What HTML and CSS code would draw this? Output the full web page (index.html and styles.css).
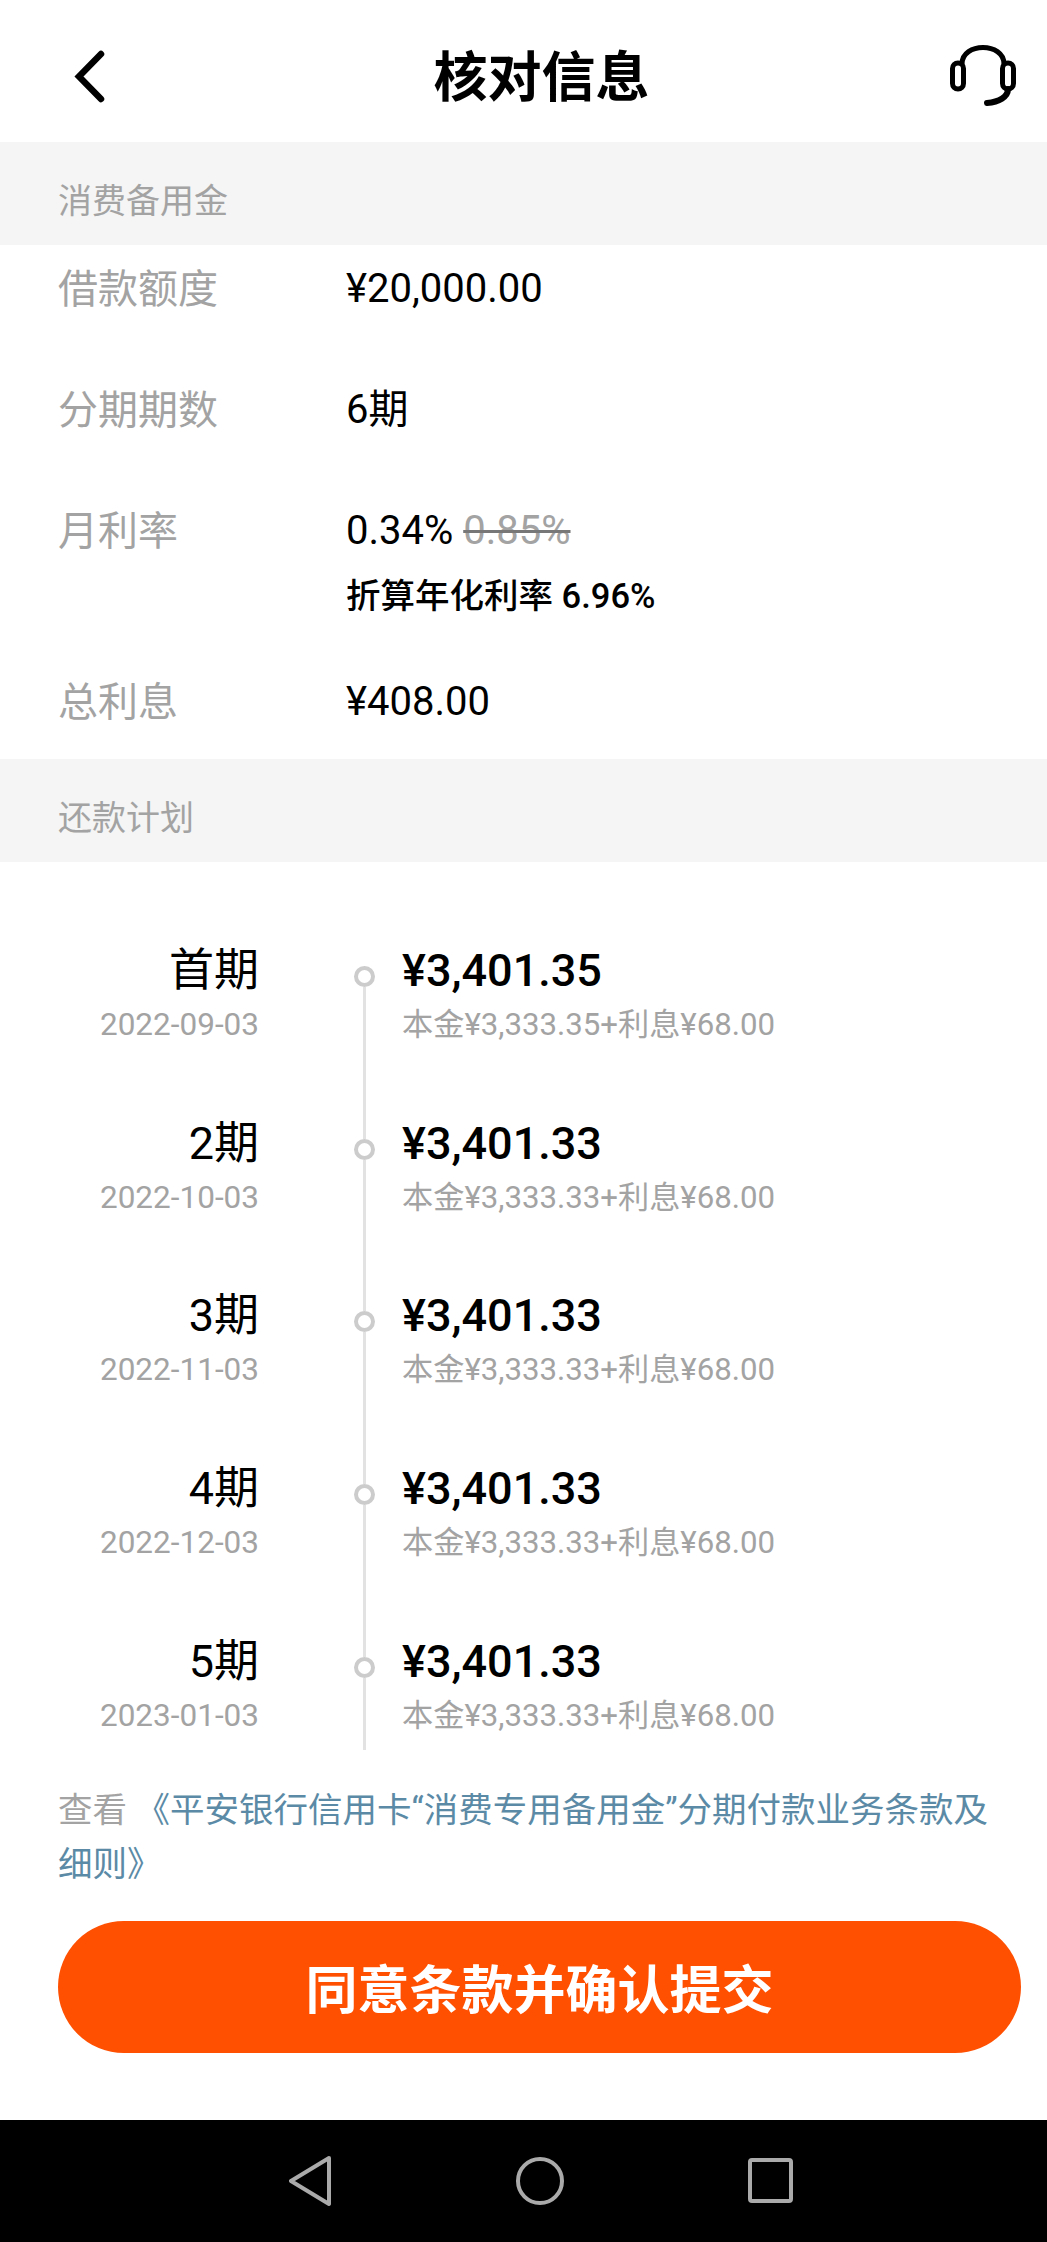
FILE: index.html
```html
<!DOCTYPE html>
<html lang="zh-CN">
<head>
    <meta charset="UTF-8">
    <meta name="viewport" content="width=device-width, initial-scale=1.0">
    <title>核对信息</title>
    <link rel="stylesheet" href="styles.css">
</head>
<body>

    <header class="topbar">
        <svg class="icon-back" width="40" height="60" viewBox="0 0 40 60">
            <path d="M31 7 L9 29.5 L31 52" fill="none" stroke="#000" stroke-width="6.5" stroke-linecap="round" stroke-linejoin="miter"/>
        </svg>
        <h1 class="title">核对信息</h1>
        <svg class="icon-service" width="68" height="62" viewBox="0 0 68 62">
            <path d="M13 20 C13 -2 55 -2 55 20" fill="none" stroke="#000" stroke-width="5"/>
            <rect x="3.5" y="19" width="11" height="26" rx="5.5" fill="none" stroke="#000" stroke-width="5"/>
            <rect x="53.5" y="19" width="11" height="26" rx="5.5" fill="none" stroke="#000" stroke-width="5"/>
            <path d="M59 45 C59 53 50 58 38 59" fill="none" stroke="#000" stroke-width="6" stroke-linecap="round"/>
        </svg>
    </header>

    <div class="section-head">消费备用金</div>

    <section class="info">
        <div class="info-row">
            <div class="info-label">借款额度</div>
            <div class="info-value">¥20,000.00</div>
        </div>
        <div class="info-row">
            <div class="info-label">分期期数</div>
            <div class="info-value">6期</div>
        </div>
        <div class="info-row">
            <div class="info-label">月利率</div>
            <div class="info-value">
                0.34% <span class="old-rate">0.85%</span>
                <div class="info-note">折算年化利率 6.96%</div>
            </div>
        </div>
        <div class="info-row">
            <div class="info-label">总利息</div>
            <div class="info-value">¥408.00</div>
        </div>
    </section>

    <div class="section-head">还款计划</div>

    <section class="plan">
        <div class="plan-row">
            <div class="plan-when"><div class="plan-term">首期</div><div class="plan-date">2022-09-03</div></div>
            <div class="plan-axis"><span class="plan-dot"></span><span class="plan-line"></span></div>
            <div class="plan-money"><div class="plan-amount">¥3,401.35</div><div class="plan-detail">本金¥3,333.35+利息¥68.00</div></div>
        </div>
        <div class="plan-row">
            <div class="plan-when"><div class="plan-term">2期</div><div class="plan-date">2022-10-03</div></div>
            <div class="plan-axis"><span class="plan-dot"></span><span class="plan-line"></span></div>
            <div class="plan-money"><div class="plan-amount">¥3,401.33</div><div class="plan-detail">本金¥3,333.33+利息¥68.00</div></div>
        </div>
        <div class="plan-row">
            <div class="plan-when"><div class="plan-term">3期</div><div class="plan-date">2022-11-03</div></div>
            <div class="plan-axis"><span class="plan-dot"></span><span class="plan-line"></span></div>
            <div class="plan-money"><div class="plan-amount">¥3,401.33</div><div class="plan-detail">本金¥3,333.33+利息¥68.00</div></div>
        </div>
        <div class="plan-row">
            <div class="plan-when"><div class="plan-term">4期</div><div class="plan-date">2022-12-03</div></div>
            <div class="plan-axis"><span class="plan-dot"></span><span class="plan-line"></span></div>
            <div class="plan-money"><div class="plan-amount">¥3,401.33</div><div class="plan-detail">本金¥3,333.33+利息¥68.00</div></div>
        </div>
        <div class="plan-row plan-row-last">
            <div class="plan-when"><div class="plan-term">5期</div><div class="plan-date">2023-01-03</div></div>
            <div class="plan-axis"><span class="plan-dot"></span><span class="plan-line"></span></div>
            <div class="plan-money"><div class="plan-amount">¥3,401.33</div><div class="plan-detail">本金¥3,333.33+利息¥68.00</div></div>
        </div>
    </section>

    <p class="terms">查看 <a class="terms-link" href="#">《平安银行信用卡“消费专用备用金”分期付款业务条款及</a><br><a class="terms-link" href="#">细则》</a></p>

    <button class="submit">同意条款并确认提交</button>

    <nav class="navbar">
        <svg width="44" height="52" viewBox="0 0 44 52">
            <path d="M40 3 L2 26 L40 49 Z" fill="none" stroke="#aaa" stroke-width="4" stroke-linejoin="round"/>
        </svg>
        <svg width="52" height="52" viewBox="0 0 52 52">
            <circle cx="26" cy="26" r="22" fill="none" stroke="#aaa" stroke-width="4"/>
        </svg>
        <svg width="48" height="48" viewBox="0 0 48 48">
            <rect x="3" y="3" width="41" height="41" rx="2" fill="none" stroke="#aaa" stroke-width="4"/>
        </svg>
    </nav>

</body>
</html>
```

FILE: styles.css
```css
html, body {
    margin: 0;
    padding: 0;
}
body {
    width: 1047px;
    height: 2242px;
    overflow: hidden;
    background-color: #fff;
    font-family: Roboto, "Noto Sans CJK SC", sans-serif;
    color: #000;
}
.topbar {
    height: 142px;
    display: flex;
    align-items: center;
    justify-content: space-between;
    padding: 0 30px 0 70px;
    box-sizing: border-box;
}
.title {
    margin: 16px 0 0 24px;
    font-size: 54px;
    font-weight: 700;
    line-height: 70px;
}
.icon-back {
    margin-top: 12px;
}
.icon-service {
    margin-top: 7px;
}
.section-head {
    height: 103px;
    line-height: 118px;
    padding-left: 58px;
    background-color: #f5f5f5;
    font-size: 34px;
    color: #a3a3a3;
}
.info {
    padding-top: 16px;
}
.info-row {
    display: flex;
    padding-bottom: 64px;
    font-size: 40px;
    line-height: 56px;
}
.info-row:last-child {
    padding-bottom: 28px;
}
.info-label {
    width: 346px;
    padding-left: 58px;
    padding-top: 1px;
    box-sizing: border-box;
    color: #a3a3a3;
}
.info-value {
    font-size: 40px;
}
.old-rate {
    color: #a3a3a3;
    text-decoration: line-through;
    text-decoration-color: #777;
    text-decoration-thickness: 3px;
}
.info-note {
    font-size: 34.5px;
    font-weight: 500;
    line-height: 50px;
    margin-top: 12px;
    margin-bottom: -11px;
}
.plan {
    padding-top: 78px;
}
.plan-row {
    display: flex;
    height: 172.7px;
}
.plan-row-last {
    height: 119px;
}
.plan-when {
    width: 259px;
    text-align: right;
}
.plan-term {
    font-size: 45px;
    line-height: 62px;
}
.plan-date {
    font-size: 31.5px;
    line-height: 42px;
    margin-top: 2px;
    color: #a3a3a3;
}
/* the line runs on to the next dot, so the axis is pushed down by the dot's offset */
.plan-axis {
    width: 60px;
    margin: 26px 0 -26px 75px;
    display: flex;
    flex-direction: column;
    align-items: center;
}
.plan-row-last .plan-axis {
    margin-bottom: 0;
}
.plan-dot {
    width: 21px;
    height: 21px;
    box-sizing: border-box;
    border: 4.5px solid #ccc;
    border-radius: 50%;
    flex-shrink: 0;
}
.plan-line {
    flex: 1;
    width: 3px;
    background-color: #e2e2e2;
}
.plan-money {
    margin-left: 8px;
}
.plan-amount {
    font-size: 45px;
    font-weight: 500;
    line-height: 62px;
}
.plan-detail {
    font-size: 31.2px;
    line-height: 42px;
    margin-top: 2px;
    color: #a3a3a3;
}
.terms {
    margin: 33px 32px 0 58px;
    font-size: 34.5px;
    line-height: 54px;
    color: #a3a3a3;
}
.terms-link {
    color: #5b8aa6;
    text-decoration: none;
}
.submit {
    display: block;
    width: 963px;
    height: 132px;
    margin: 30px 0 0 58px;
    padding: 0;
    border: none;
    border-radius: 66px;
    background-color: #ff4f00;
    color: #fff;
    font-family: inherit;
    font-size: 52px;
    font-weight: 700;
}
.navbar {
    height: 122px;
    margin-top: 67px;
    padding-left: 289px;
    background-color: #000;
    display: flex;
    align-items: center;
    gap: 181px;
}
```
